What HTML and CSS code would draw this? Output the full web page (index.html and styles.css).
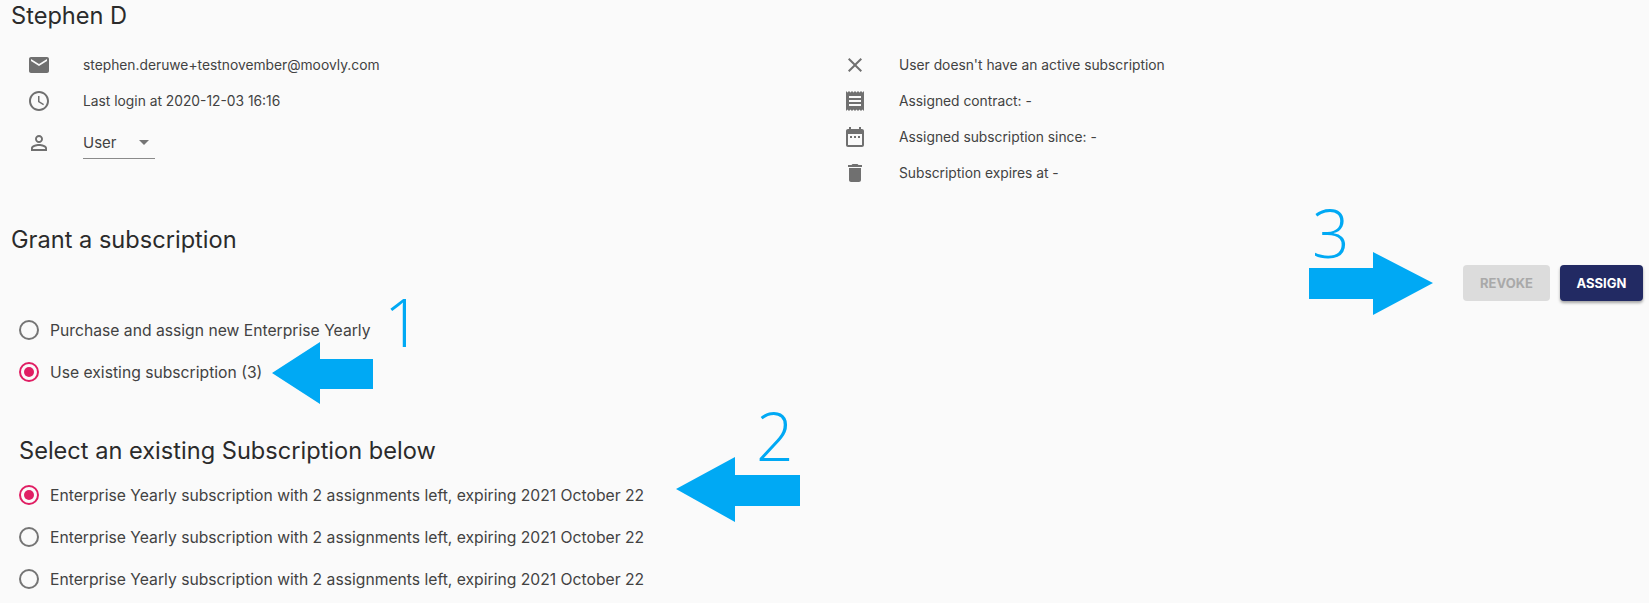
FILE: index.html
```html
<!DOCTYPE html>
<html lang="en">
<head>
<meta charset="utf-8">
<title>Stephen D</title>
<link rel="stylesheet" href="styles.css">
</head>
<body>
<main class="page">
  <h1 class="title name">Stephen D</h1>
  <section class="details">
    <ul class="info">
      <li class="info-row">
        <svg class="icon" viewBox="0 0 24 24"><path d="M20 4H4c-1.1 0-1.99.9-1.99 2L2 18c0 1.1.9 2 2 2h16c1.1 0 2-.9 2-2V6c0-1.1-.9-2-2-2zm0 4l-8 5-8-5V6l8 5 8-5v2z"/></svg>
        <span>stephen.deruwe+testnovember@moovly.com</span>
      </li>
      <li class="info-row">
        <svg class="icon" viewBox="0 0 24 24"><path d="M11.99 2C6.47 2 2 6.48 2 12s4.47 10 9.99 10C17.52 22 22 17.52 22 12S17.52 2 11.99 2zM12 20c-4.42 0-8-3.58-8-8s3.58-8 8-8 8 3.58 8 8-3.58 8-8 8zm.5-13H11v6l5.25 3.15.75-1.23-4.5-2.67z"/></svg>
        <span>Last login at 2020-12-03 16:16</span>
      </li>
      <li class="info-row role-row">
        <svg class="icon" viewBox="0 0 24 24"><path d="M12 5.9c1.16 0 2.1.94 2.1 2.1s-.94 2.1-2.1 2.1S9.9 9.16 9.9 8s.94-2.1 2.1-2.1m0 9c2.97 0 6.1 1.46 6.1 2.1v1.1H5.9V17c0-.64 3.13-2.1 6.1-2.1M12 4C9.79 4 8 5.79 8 8s1.79 4 4 4 4-1.79 4-4-1.79-4-4-4zm0 9c-2.67 0-8 1.34-8 4v3h16v-3c0-2.66-5.33-4-8-4z"/></svg>
        <div class="select"><span>User</span><i class="caret"></i></div>
      </li>
    </ul>
    <ul class="info info-right">
      <li class="info-row">
        <svg class="icon" viewBox="0 0 24 24"><path d="M19 6.41L17.59 5 12 10.59 6.41 5 5 6.41 10.59 12 5 17.59 6.41 19 12 13.41 17.59 19 19 17.59 13.41 12z"/></svg>
        <span>User doesn't have an active subscription</span>
      </li>
      <li class="info-row">
        <svg class="icon" viewBox="0 0 24 24"><path d="M18 17H6v-2h12v2zm0-4H6v-2h12v2zm0-4H6V7h12v2zM3 22l1.5-1.5L6 22l1.5-1.5L9 22l1.5-1.5L12 22l1.5-1.5L15 22l1.5-1.5L18 22l1.5-1.5L21 22V2l-1.5 1.5L18 2l-1.5 1.5L15 2l-1.5 1.5L12 2l-1.5 1.5L9 2 7.5 3.5 6 2 4.5 3.5 3 2v20z"/></svg>
        <span>Assigned contract: -</span>
      </li>
      <li class="info-row">
        <svg class="icon" viewBox="0 0 24 24"><path d="M9 11H7v2h2v-2zm4 0h-2v2h2v-2zm4 0h-2v2h2v-2zm2-7h-1V2h-2v2H8V2H6v2H5c-1.11 0-1.99.9-1.99 2L3 20c0 1.1.89 2 2 2h14c1.1 0 2-.9 2-2V6c0-1.1-.9-2-2-2zm0 16H5V9h14v11z"/></svg>
        <span>Assigned subscription since: -</span>
      </li>
      <li class="info-row">
        <svg class="icon" viewBox="0 0 24 24"><path d="M6 19c0 1.1.9 2 2 2h8c1.1 0 2-.9 2-2V7H6v12zM19 4h-3.5l-1-1h-5l-1 1H5v2h14V4z"/></svg>
        <span>Subscription expires at -</span>
      </li>
    </ul>
  </section>

  <h2 class="title grant-title">Grant a subscription</h2>
  <div class="actions">
    <button class="btn btn-disabled" type="button">REVOKE</button>
    <button class="btn btn-primary" type="button">ASSIGN</button>
  </div>

  <div class="radios radios-grant">
    <label class="radio"><i class="dot"></i><span>Purchase and assign new Enterprise Yearly</span></label>
    <label class="radio checked"><i class="dot"></i><span>Use existing subscription (3)</span></label>
  </div>

  <h3 class="title sub-title">Select an existing Subscription below</h3>
  <div class="radios">
    <label class="radio checked"><i class="dot"></i><span>Enterprise Yearly subscription with 2 assignments left, expiring 2021 October 22</span></label>
    <label class="radio"><i class="dot"></i><span>Enterprise Yearly subscription with 2 assignments left, expiring 2021 October 22</span></label>
    <label class="radio"><i class="dot"></i><span>Enterprise Yearly subscription with 2 assignments left, expiring 2021 October 22</span></label>
  </div>
</main>

<svg class="arrows" viewBox="0 0 1649 603" width="1649" height="603">
  <polygon points="1309,268 1373,268 1373,252 1433,283 1373,315 1373,299 1309,299"/>
  <polygon points="272,373 320,342 320,359 373,359 373,389 320,389 320,404"/>
  <polygon points="676,489 735,457 735,475 800,475 800,506 735,506 735,522"/>
</svg>
<span class="num num-1">1</span>
<span class="num num-2">2</span>
<span class="num num-3">3</span>
</body>
</html>
```
FILE: styles.css
```css
* { box-sizing: border-box; }
html, body { margin: 0; padding: 0; }
body {
  width: 1649px;
  height: 603px;
  overflow: hidden;
  position: relative;
  background: #fafafa;
  font-family: Inter, "Liberation Sans", sans-serif;
  font-size: 13.8px;
  color: #424242;
}
.page { padding: 2px 6px 0 11px; }
.title {
  margin: 0;
  font-weight: 400;
  font-size: 23.6px;
  line-height: 28px;
  color: #2b2b2b;
}
.details { display: flex; padding-top: 17px; }
.info { list-style: none; margin: 0; padding: 0 0 0 16px; width: 832px; flex: none; }
.info-right { padding-left: 0; width: 790px; }
.info-row { display: flex; align-items: center; height: 36px; gap: 32px; }
.role-row { height: 48px; }
.icon { width: 24px; height: 24px; flex: none; fill: #707070; }
.select {
  display: flex;
  align-items: center;
  justify-content: space-between;
  width: 72px;
  height: 32px;
  font-size: 15px;
  padding-right: 6px;
  border-bottom: 1px solid #8a8a8a;
}
.caret {
  width: 0;
  height: 0;
  border: 5px solid transparent;
  border-top-color: #757575;
  border-bottom: 0;
}
.grant-title { margin-top: 35px; }
.actions { display: flex; justify-content: flex-end; gap: 10px; margin-top: 11px; }
.btn {
  height: 36px;
  border: 0;
  border-radius: 4px;
  font-family: inherit;
  font-size: 13px;
  font-weight: 700;
  padding: 0;
}
.btn-disabled { width: 87px; background: #dcdcdc; color: #a9a9a9; }
.btn-primary {
  width: 83px;
  background: #222a63;
  color: #fff;
  box-shadow: 0 2px 3px rgba(0, 0, 0, .35);
}
.radios { display: flex; flex-direction: column; padding-left: 8px; font-size: 15.7px; }
.radios-grant { margin-top: 8px; }
.radio { display: flex; align-items: center; height: 42px; gap: 11px; }
.dot {
  position: relative;
  width: 20px;
  height: 20px;
  flex: none;
  border: 2px solid #757575;
  border-radius: 50%;
}
.checked .dot { border-color: #e01e63; }
.checked .dot::after {
  content: "";
  position: absolute;
  inset: 3px;
  border-radius: 50%;
  background: #e01e63;
}
.sub-title { margin-top: 44px; margin-bottom: 9px; padding-left: 8px; }
.arrows { position: absolute; left: 0; top: 0; fill: #00a9f4; pointer-events: none; }
.num {
  position: absolute;
  font-family: "Open Sans", sans-serif;
  font-weight: 350;
  font-size: 66px;
  line-height: 66px;
  color: #00a9f4;
}
.num-1 { left: 384px; top: 288px; }
.num-2 { left: 756px; top: 402px; }
.num-3 { left: 1312px; top: 199px; }
```
